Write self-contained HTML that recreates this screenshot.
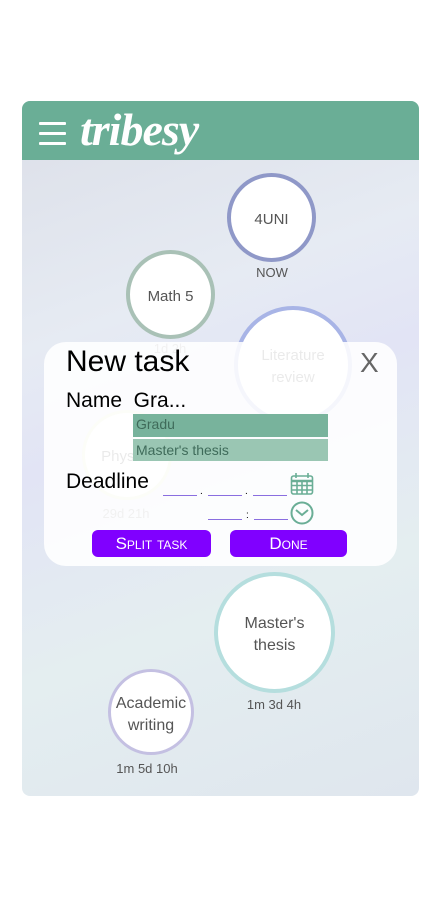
<!DOCTYPE html>
<html><head><meta charset="utf-8"><style>
*{margin:0;padding:0;box-sizing:border-box}
body{width:441px;height:897px;background:#fff;position:relative;overflow:hidden;font-family:"Liberation Sans",sans-serif}
.phone{position:absolute;left:22px;top:101px;width:397px;height:695px;border-radius:8px;overflow:hidden;
background:linear-gradient(160deg,#dcdfe8 0%,#e6ebf3 30%,#e2e4f5 45%,#e4eef0 70%,#dfe6ee 100%)}
.hdr{position:absolute;left:0;top:0;width:397px;height:59px;background:#6aae96}
.burger{position:absolute;left:17px;width:27px;height:3px;background:#fff;border-radius:1px}
.logo{position:absolute;left:58px;top:2px;color:#fff;font:italic bold 46px "Liberation Serif",serif;letter-spacing:-1px}
.c{position:absolute;border-radius:50%;background:#fff;display:flex;align-items:center;justify-content:center;text-align:center;color:#555;font-size:15px;line-height:22px;padding-top:4px}
.t{position:absolute;color:#555;font-size:13px;text-align:center;width:120px}
.modal{position:absolute;left:44px;top:342px;width:353px;height:224px;border-radius:22px;background:rgba(255,255,255,0.88)}
.m{position:absolute;color:#000}
.btn{position:absolute;top:530px;height:27px;background:#8000ff;border-radius:6px;color:#fff;text-align:center;font-size:17px;line-height:27px;font-variant:small-caps}
.ln{position:absolute;height:1px;background:#8a6ee0}
</style></head><body>
<div class="phone">
<div class="hdr">
<div class="burger" style="top:21px"></div><div class="burger" style="top:31px"></div><div class="burger" style="top:41px"></div>
<div class="logo">tribesy</div>
</div>
</div>
<div class="c" style="left:227px;top:173px;width:89px;height:89px;border:4px solid #8f98c8">4UNI</div>
<div class="t" style="left:212px;top:265px">NOW</div>
<div class="c" style="left:126px;top:250px;width:89px;height:89px;border:4px solid #a9c1b6">Math 5</div>
<div class="t" style="left:110px;top:341px;color:#888">1d 2h</div>
<div class="c" style="left:234px;top:306px;width:118px;height:118px;border:4px solid #a8b4e6">Literature<br>review</div>
<div class="c" style="left:82px;top:410px;width:90px;height:90px;border:3px solid #e6e8c0">Physics</div>
<div class="t" style="left:66px;top:506px;color:#888">29d 21h</div>
<div class="modal"></div>
<div class="m" style="left:66px;top:345px;font-size:30px">New task</div>
<div class="m" style="left:360px;top:347px;font-size:28px;color:#666">X</div>
<div class="m" style="left:66px;top:389px;font-size:21px">Name&nbsp; Gra...</div>
<div style="position:absolute;left:133px;top:414px;width:195px;height:23px;background:#78b39c;color:#3f6b5a;font-size:14px;line-height:21px;padding-left:3px">Gradu</div>
<div style="position:absolute;left:133px;top:439px;width:195px;height:22px;background:#9ac6b3;color:#3f6b5a;font-size:14px;line-height:22px;padding-left:3px">Master's thesis</div>
<div class="m" style="left:66px;top:470px;font-size:21px">Deadline</div>
<div class="ln" style="left:163px;top:495px;width:34px"></div><div class="m" style="left:200px;top:486px;font-size:10px">.</div>
<div class="ln" style="left:208px;top:495px;width:34px"></div><div class="m" style="left:245px;top:486px;font-size:10px">.</div>
<div class="ln" style="left:253px;top:495px;width:34px"></div>
<div class="ln" style="left:208px;top:519px;width:34px"></div><div class="m" style="left:246px;top:510px;font-size:10px">:</div>
<div class="ln" style="left:254px;top:519px;width:34px"></div>
<svg style="position:absolute;left:290px;top:472px" width="24" height="24" viewBox="0 0 24 24" fill="none" stroke="#6aae96" stroke-width="1.6">
<rect x="1.5" y="4" width="21" height="18" rx="2"/><line x1="6" y1="1" x2="6" y2="6"/><line x1="18" y1="1" x2="18" y2="6"/>
<line x1="1.5" y1="9" x2="22.5" y2="9" stroke-width="2.5"/><line x1="1.5" y1="13.5" x2="22.5" y2="13.5"/><line x1="1.5" y1="18" x2="22.5" y2="18"/>
<line x1="7" y1="9" x2="7" y2="22"/><line x1="12" y1="9" x2="12" y2="22"/><line x1="17" y1="9" x2="17" y2="22"/></svg>
<svg style="position:absolute;left:290px;top:501px" width="24" height="24" viewBox="0 0 24 24" fill="none" stroke="#6aae96" stroke-width="2">
<circle cx="12" cy="12" r="10.5"/><polyline points="6,9 12,14 18,9"/></svg>
<div class="btn" style="left:92px;width:119px">Split task</div>
<div class="btn" style="left:230px;width:117px">Done</div>
<div class="c" style="left:214px;top:572px;width:121px;height:121px;border:4px solid #b5dede;font-size:16px">Master's<br>thesis</div>
<div class="t" style="left:214px;top:697px">1m 3d 4h</div>
<div class="c" style="left:108px;top:669px;width:86px;height:86px;border:3px solid #c4c0e2;font-size:16px;padding-top:6px">Academic<br>writing</div>
<div class="t" style="left:87px;top:761px">1m 5d 10h</div>
</body></html>
